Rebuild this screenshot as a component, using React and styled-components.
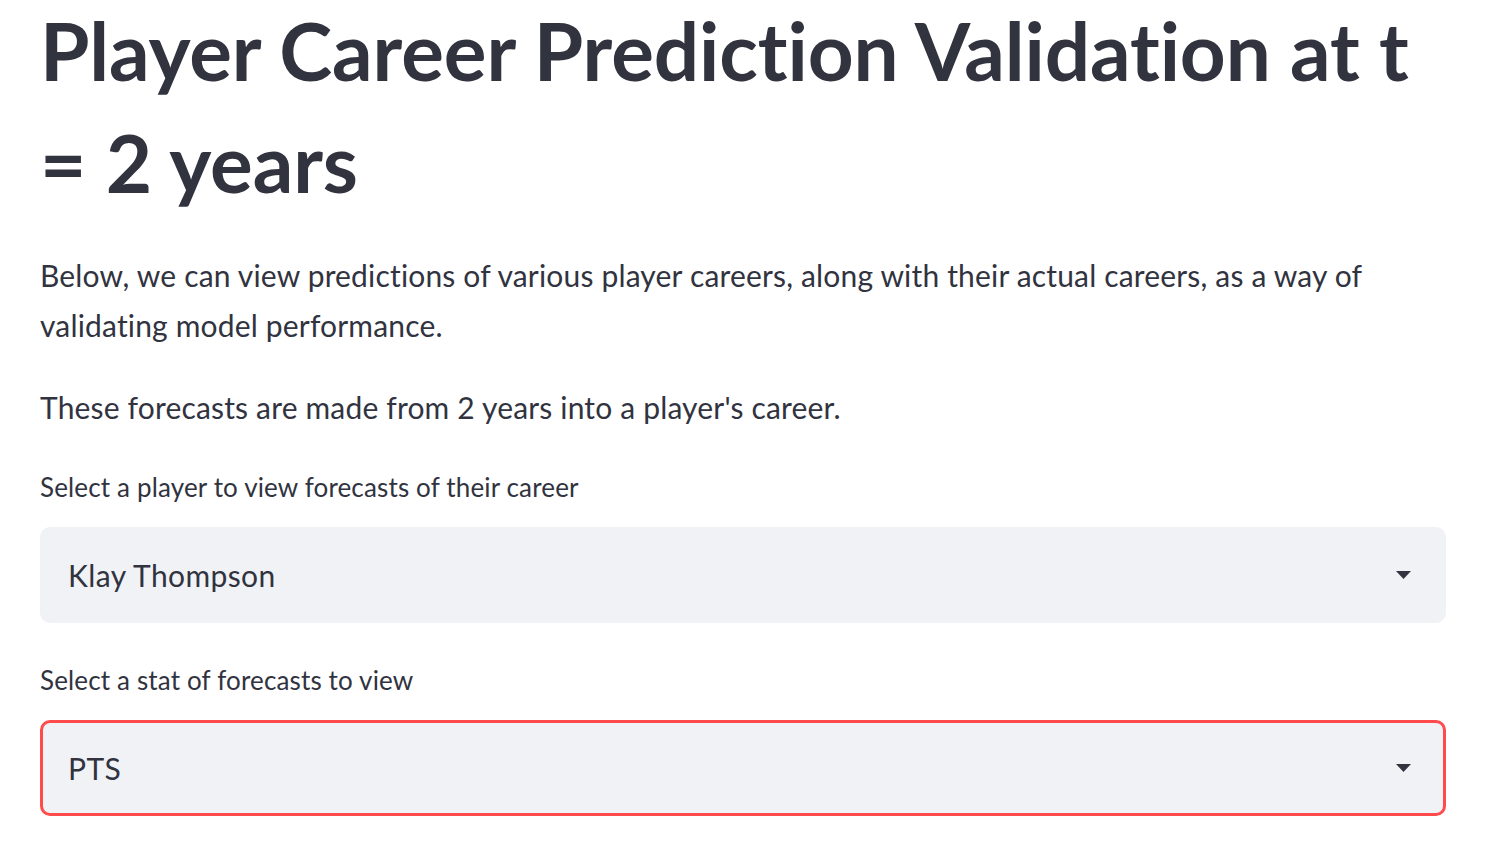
import React from "react";
import styled, { createGlobalStyle } from "styled-components";

const Global = createGlobalStyle`
  html, body { margin: 0; padding: 0; background: #ffffff; }
  body {
    font-family: "Source Sans Pro", Lato, "Noto Sans", sans-serif;
    color: rgb(49, 51, 63);
    -webkit-font-smoothing: antialiased;
  }
`;

const Page = styled.main`
  display: flex;
  flex-direction: column;
  padding: 0 62px 0 40px;
  width: 1406px;
`;

const Title = styled.h1`
  margin: -6px 0 0 0;
  font-size: 80px;
  line-height: 112px;
  font-weight: 700;
  letter-spacing: -0.1px;
`;

const Para = styled.p`
  margin: ${(p) => p.$top}px 0 0 0;
  font-size: 30px;
  line-height: 50px;
  font-weight: 400;
  letter-spacing: 0.17px;
`;

const Field = styled.div`
  display: flex;
  flex-direction: column;
  margin-top: ${(p) => p.$top}px;
`;

const Label = styled.label`
  font-size: 26px;
  line-height: 40px;
  margin-bottom: 20px;
  letter-spacing: 0.15px;
`;

const SelectBox = styled.div`
  box-sizing: border-box;
  height: 96px;
  display: flex;
  align-items: center;
  justify-content: space-between;
  background: #f0f2f6;
  border-radius: 10px;
  border: 3px solid ${(p) => (p.$focused ? "#ff4b4b" : "#f0f2f6")};
  padding: 0 33px 0 25px;
  font-size: 30px;
  letter-spacing: 0.4px;
`;

const Caret = styled.svg`
  width: 15px;
  height: 8px;
  flex: none;
  margin-right: -1px;
`;

function Select({ value, focused }) {
  return (
    <SelectBox $focused={focused}>
      <span>{value}</span>
      <Caret viewBox="0 0 15 8">
        <path d="M0 0 H15 L7.5 8 Z" fill="rgb(49,51,63)" />
      </Caret>
    </SelectBox>
  );
}

export default function App() {
  return (
    <>
      <Global />
      <Page>
        <Title>Player Career Prediction Validation at t = 2 years</Title>
        <Para $top={32}>
          Below, we can view predictions of various player careers, along with
          their actual careers, as a way of validating model performance.
        </Para>
        <Para $top={32}>
          These forecasts are made from 2 years into a player's career.
        </Para>
        <Field $top={35}>
          <Label>Select a player to view forecasts of their career</Label>
          <Select value="Klay Thompson" />
        </Field>
        <Field $top={37}>
          <Label>Select a stat of forecasts to view</Label>
          <Select value="PTS" focused />
        </Field>
      </Page>
    </>
  );
}
